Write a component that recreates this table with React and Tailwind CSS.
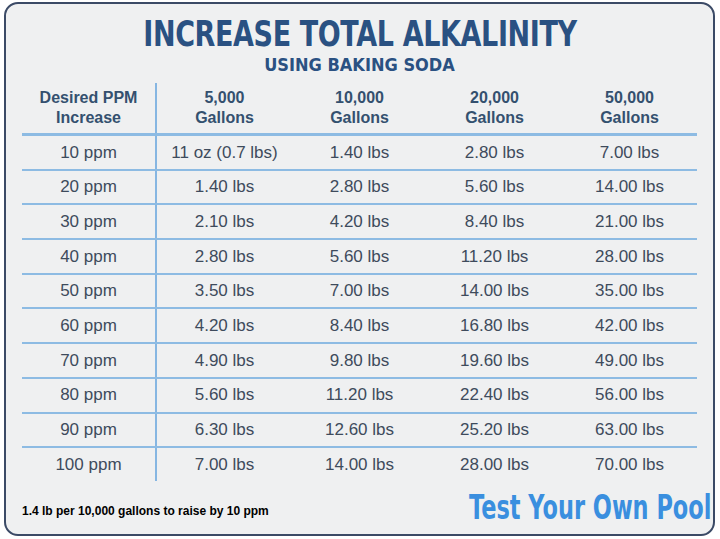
import React from "react";

const cols = ["5,000", "10,000", "20,000", "50,000"];

const rows = [
  ["10 ppm", "11 oz (0.7 lbs)", "1.40 lbs", "2.80 lbs", "7.00 lbs"],
  ["20 ppm", "1.40 lbs", "2.80 lbs", "5.60 lbs", "14.00 lbs"],
  ["30 ppm", "2.10 lbs", "4.20 lbs", "8.40 lbs", "21.00 lbs"],
  ["40 ppm", "2.80 lbs", "5.60 lbs", "11.20 lbs", "28.00 lbs"],
  ["50 ppm", "3.50 lbs", "7.00 lbs", "14.00 lbs", "35.00 lbs"],
  ["60 ppm", "4.20 lbs", "8.40 lbs", "16.80 lbs", "42.00 lbs"],
  ["70 ppm", "4.90 lbs", "9.80 lbs", "19.60 lbs", "49.00 lbs"],
  ["80 ppm", "5.60 lbs", "11.20 lbs", "22.40 lbs", "56.00 lbs"],
  ["90 ppm", "6.30 lbs", "12.60 lbs", "25.20 lbs", "63.00 lbs"],
  ["100 ppm", "7.00 lbs", "14.00 lbs", "28.00 lbs", "70.00 lbs"],
];

const App = () => {
  return (
    <div className="w-[720px] h-[539px] bg-white pt-[2px] pl-[4px] font-['Liberation_Sans',Arial,sans-serif]">
      <div className="w-[711px] h-[534px] rounded-[14px] border-2 border-[#3b4a66] bg-[#eff0f1] pt-[10px]">
        <div className="flex justify-center">
          <h1 className="scale-x-[0.75] whitespace-nowrap text-[36px] leading-[40px] font-bold tracking-[-0.5px] text-[#2a5182] font-['DejaVu_Sans',sans-serif]">
            INCREASE TOTAL ALKALINITY
          </h1>
        </div>
        <h2 className="text-center text-[18px] leading-[22px] font-bold text-[#2a5182] font-['DejaVu_Sans_Condensed','DejaVu_Sans',sans-serif] [font-stretch:condensed]">
          USING BAKING SODA
        </h2>

        <div className="mx-[16px] mt-[7px]">
          <div className="flex border-b-[3px] border-[#8dbbe3]">
            <div className="w-[135px] h-[50px] flex flex-col items-center justify-center border-r-2 border-[#86b6e2] text-[16px] leading-[20px] font-bold text-[#34506f]">
              <span>Desired PPM</span>
              <span>Increase</span>
            </div>
            {cols.map((c) => (
              <div key={c} className="flex-1 h-[50px] flex flex-col items-center justify-center text-[16px] leading-[20px] font-bold text-[#34506f]">
                <span>{c}</span>
                <span>Gallons</span>
              </div>
            ))}
          </div>
          {rows.map((r, i) => (
            <div
              key={r[0]}
              className={`flex ${i < rows.length - 1 ? "border-b-2 border-[#8dbbe3]" : ""}`}
            >
              {r.map((v, j) => (
                <div
                  key={j}
                  className={
                    j === 0
                      ? "w-[135px] h-[32.7px] flex items-center justify-center border-r-2 border-[#86b6e2] text-[17px] text-[#3e4b5c]"
                      : "flex-1 h-[32.7px] flex items-center justify-center text-[17px] text-[#3e4b5c]"
                  }
                >
                  {v}
                </div>
              ))}
            </div>
          ))}
        </div>

        <div className="flex items-end justify-between pl-[16px] pr-[2px] mt-[7px]">
          <p className="text-[12px] font-bold text-black mb-[6px]">
            1.4 lb per 10,000 gallons to raise by 10 ppm
          </p>
          <p className="origin-right scale-x-[0.66] whitespace-nowrap text-[34px] leading-[38px] font-bold text-[#3a8fdf] font-['DejaVu_Sans',sans-serif]">
            Test Your Own Pool
          </p>
        </div>
      </div>
    </div>
  );
};

export default App;
